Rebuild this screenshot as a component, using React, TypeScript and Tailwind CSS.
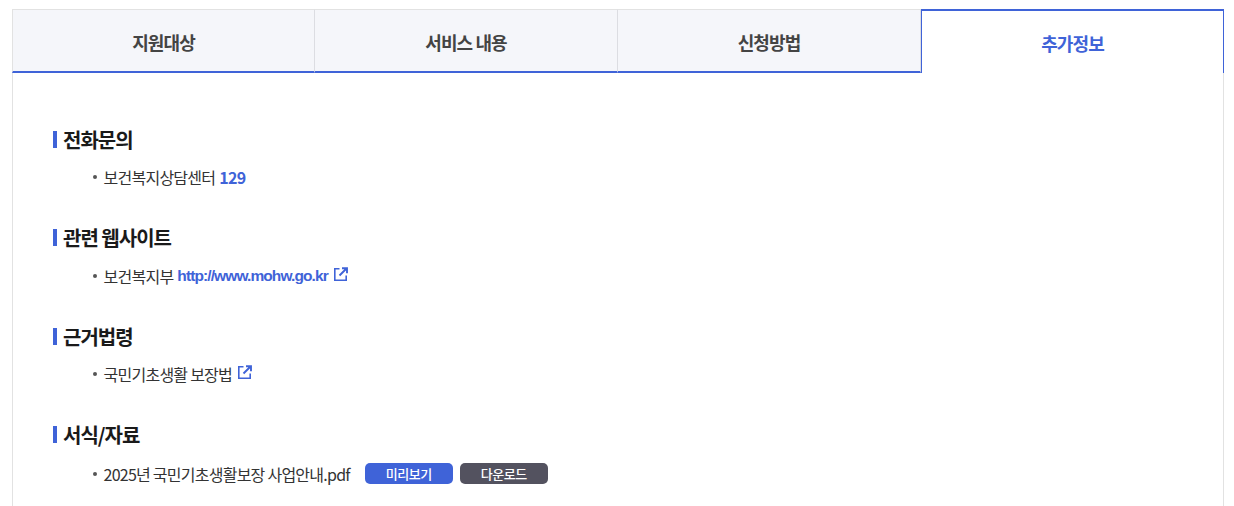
const font = { fontFamily: '"Noto Sans CJK KR", "Noto Sans", sans-serif' }

const tabs = ['지원대상', '서비스 내용', '신청방법', '추가정보']

function ExternalIcon() {
  return (
    <svg width="14" height="14" viewBox="0 0 14 14" fill="none" className="mb-[4px] ml-[6px] inline-block shrink-0">
      <path d="M5.5 1.8H.8v11.4h11.4V8.5" stroke="#3f63d8" strokeWidth="1.6" />
      <path d="M5.5 8.5 12 2M8 1.2h5v5" stroke="#3f63d8" strokeWidth="1.9" />
    </svg>
  )
}

function Section({ title, rowClass, children }: { title: string; rowClass?: string; children: React.ReactNode }) {
  return (
    <section className="h-[98.5px]">
      <h3 className="flex h-[32px] items-center text-[20px] leading-[32px] font-bold tracking-[-1px] text-[#1a1a1a]">
        <span className="mr-[6px] h-[17px] w-[4px] bg-[#3f63d8]" />
        <span className="pt-[1px]">{title}</span>
      </h3>
      <div className={`flex h-[30px] items-center pl-[40px] text-[16px] tracking-[-0.75px] text-[#333] ${rowClass ?? 'mt-[7px]'}`}>
        <span className="mr-[6.5px] h-[4px] w-[4px] rounded-full bg-[#555]" />
        {children}
      </div>
    </section>
  )
}

export default function App() {
  return (
    <div style={font} className="h-[506px] overflow-hidden bg-white pt-[9px] pr-[10px] pl-[12px]">
      <div className="flex h-[64px]">
        {tabs.map((t, i) =>
          i === 3 ? (
            <div key={t} className="flex w-[303px] items-center justify-center border-x border-t-2 border-x-[#3f63d8] border-t-[#3f63d8] bg-white pt-[2px] text-[18px] font-bold tracking-[-0.9px] text-[#3f63d8]">
              {t}
            </div>
          ) : (
            <div key={t} className={`flex w-[303px] items-center justify-center border-t border-r border-b-2 border-t-[#e2e2e2] border-r-[#dcdde2] border-b-[#3f63d8] bg-[#f5f6fa] pt-[3px] text-[18px] font-semibold tracking-[-0.9px] text-[#444] ${i === 0 ? 'border-l border-l-[#e2e2e2]' : ''}`}>
              {t}
            </div>
          ),
        )}
      </div>
      <div className="h-[500px] border-x border-[#e2e2e2] pt-[50px] pl-[40px]">
        <Section title="전화문의">
          보건복지상담센터 <b className="ml-[4px] font-bold text-[#3f63d8]">129</b>
        </Section>
        <Section title="관련 웹사이트">
          보건복지부
          <b className="ml-[4px] font-['Liberation_Sans',sans-serif] text-[15.5px] font-bold tracking-[-0.9px] text-[#3f63d8]">http://www.mohw.go.kr</b>
          <ExternalIcon />
        </Section>
        <Section title="근거법령">
          국민기초생활 보장법
          <ExternalIcon />
        </Section>
        <Section title="서식/자료" rowClass="mt-[8px]">
          2025년 국민기초생활보장 사업안내.pdf
          <span className="ml-[15px] flex h-[21px] w-[88px] items-center justify-center rounded-[5px] bg-[#3f63d8] text-[13px] font-medium tracking-[-0.4px] text-white">미리보기</span>
          <span className="ml-[7px] flex h-[21px] w-[88px] items-center justify-center rounded-[5px] bg-[#53525f] text-[13px] font-medium tracking-[-0.4px] text-white">다운로드</span>
        </Section>
      </div>
    </div>
  )
}
